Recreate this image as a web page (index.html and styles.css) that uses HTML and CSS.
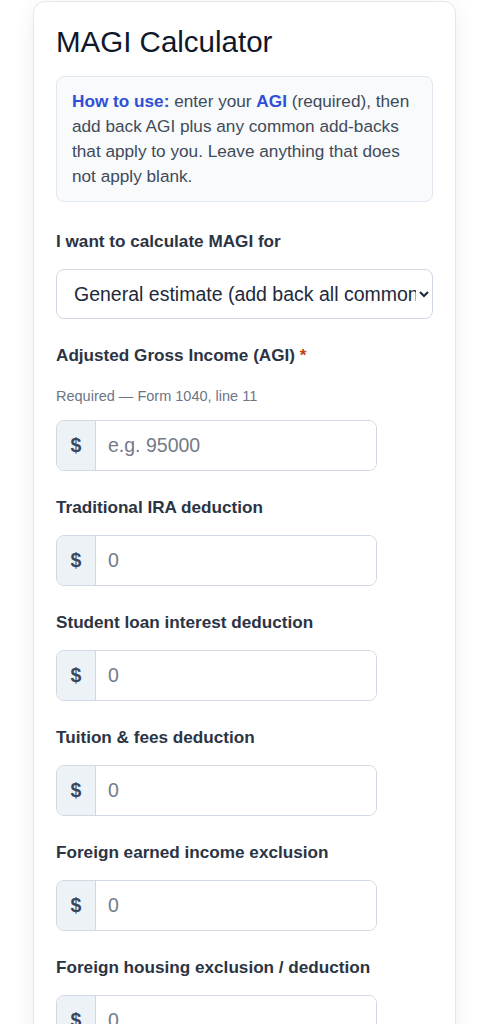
FILE: index.html
```html
<!DOCTYPE html>
<html lang="en">
<head>
<meta charset="utf-8">
<title>MAGI Calculator</title>
<link rel="stylesheet" href="styles.css">
</head>
<body>
<main class="card">
  <h1 class="title">MAGI Calculator</h1>
  <div class="info">
    <strong>How to use:</strong> enter your <strong>AGI</strong> (required), then add back AGI plus any common add-backs that apply to you. Leave anything that does not apply blank.
  </div>

  <div class="field">
    <label class="label" for="mode">I want to calculate MAGI for</label>
    <select id="mode" class="select">
      <option>General estimate (add back all common add-backs)</option>
      <option>Roth IRA contribution eligibility</option>
      <option>ACA premium tax credit</option>
    </select>
  </div>

  <div class="field">
    <label class="label label-tight" for="agi">Adjusted Gross Income (AGI) <span class="req">*</span></label>
    <div class="hint">Required — Form 1040, line 11</div>
    <div class="group">
      <span class="prefix">$</span>
      <input id="agi" class="input" type="text" placeholder="e.g. 95000">
    </div>
  </div>

  <div class="field">
    <label class="label" for="ira">Traditional IRA deduction</label>
    <div class="group">
      <span class="prefix">$</span>
      <input id="ira" class="input" type="text" placeholder="0">
    </div>
  </div>

  <div class="field">
    <label class="label" for="sli">Student loan interest deduction</label>
    <div class="group">
      <span class="prefix">$</span>
      <input id="sli" class="input" type="text" placeholder="0">
    </div>
  </div>

  <div class="field">
    <label class="label" for="tf">Tuition &amp; fees deduction</label>
    <div class="group">
      <span class="prefix">$</span>
      <input id="tf" class="input" type="text" placeholder="0">
    </div>
  </div>

  <div class="field">
    <label class="label" for="feie">Foreign earned income exclusion</label>
    <div class="group">
      <span class="prefix">$</span>
      <input id="feie" class="input" type="text" placeholder="0">
    </div>
  </div>

  <div class="field">
    <label class="label" for="fhe">Foreign housing exclusion / deduction</label>
    <div class="group">
      <span class="prefix">$</span>
      <input id="fhe" class="input" type="text" placeholder="0">
    </div>
  </div>

  <div class="field">
    <label class="label" for="tei">Tax-exempt interest</label>
    <div class="group">
      <span class="prefix">$</span>
      <input id="tei" class="input" type="text" placeholder="0">
    </div>
  </div>
</main>
</body>
</html>
```

FILE: styles.css
```css
html, body {
  margin: 0;
  padding: 0;
  background: #ffffff;
}

body {
  font-family: "Liberation Sans", Arial, sans-serif;
  font-size: 17px;
  color: #1e293b;
  padding-top: 1px;
}

.card {
  box-sizing: border-box;
  width: 423px;
  margin: 0 0 0 33px;
  background: #ffffff;
  border: 1px solid #e2e8f0;
  border-radius: 12px;
  padding: 22px 22px 40px;
  box-shadow: 0 4px 22px rgba(15, 23, 42, 0.07);
}

.title {
  margin: 0 0 16px;
  font-size: 29.5px;
  line-height: 36px;
  font-weight: 400;
  color: #0f172a;
}

.info {
  background: #f8fafc;
  border: 1px solid #e2e8f0;
  border-radius: 8px;
  padding: 12px 15px;
  line-height: 25px;
  font-size: 17.2px;
  color: #3f4a5a;
  margin-bottom: 29px;
}

.info strong {
  color: #2f4fd6;
  font-weight: 700;
}

.field {
  margin-bottom: 26px;
}

.label {
  display: block;
  font-weight: 700;
  font-size: 17.15px;
  line-height: 20px;
  color: #2b3443;
  margin-bottom: 18px;
}

.label-tight {
  margin-bottom: 21px;
}

.req {
  color: #c2410c;
}

.hint {
  font-size: 14.5px;
  line-height: 20px;
  color: #6b7686;
  margin-bottom: 14px;
}

.select {
  display: block;
  box-sizing: border-box;
  width: 100%;
  height: 50px;
  margin: 0;
  padding: 0 0 0 13px;
  font-family: "Liberation Sans", Arial, sans-serif;
  font-size: 19.5px;
  color: #1e293b;
  background: #ffffff;
  border: 1px solid #cfd8e3;
  border-radius: 8px;
}

.group {
  display: flex;
  box-sizing: border-box;
  width: 321px;
  height: 51px;
  border: 1px solid #cfd8e3;
  border-radius: 8px;
  overflow: hidden;
  background: #ffffff;
}

.prefix {
  display: flex;
  align-items: center;
  justify-content: center;
  width: 38px;
  flex: none;
  background: #edf2f7;
  border-right: 1px solid #cfd8e3;
  font-weight: 700;
  font-size: 19.5px;
  color: #3b4658;
}

.input {
  flex: 1;
  min-width: 0;
  border: 0;
  outline: none;
  margin: 0;
  padding: 0 12px;
  font-family: "Liberation Sans", Arial, sans-serif;
  font-size: 19.5px;
  color: #1e293b;
  background: #ffffff;
}

.input::placeholder {
  color: #737b87;
}
```
